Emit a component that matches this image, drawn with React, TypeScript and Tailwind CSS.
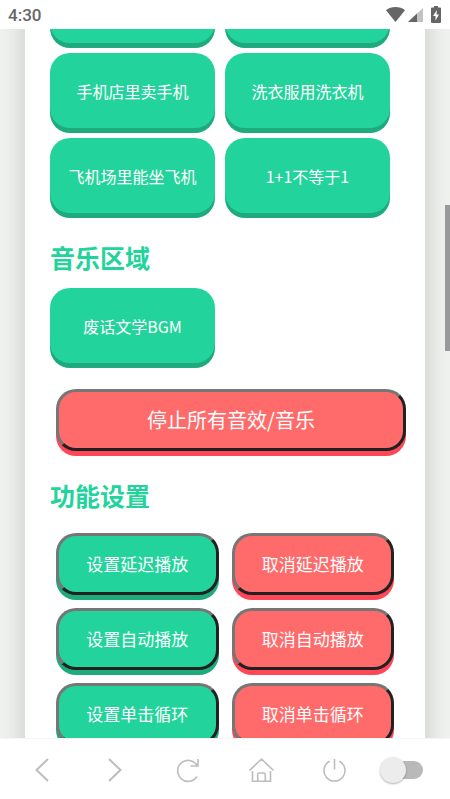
import type { ReactNode } from "react";

const soundRows = ["手机店里卖手机", "洗衣服用洗衣机", "飞机场里能坐飞机", "1+1不等于1"];

const settings = ["延迟播放", "自动播放", "单击循环"];

function SoundButton({ children }: { children?: ReactNode }) {
  return (
    <button
      type="button"
      className="h-[75px] w-full rounded-[20px] bg-[#22d49b] text-[16px] leading-6 text-white shadow-[0_5px_0_#1eaa7d]"
    >
      {children}
    </button>
  );
}

function ActionButton({ tone, large, children }: { tone: "green" | "red"; large?: boolean; children: ReactNode }) {
  const colors =
    tone === "green" ? "bg-[#22d49b] shadow-[0_5px_0_#1eaa7d]" : "bg-[#ff6b6b] shadow-[0_5px_0_#ff4757]";
  const size = large ? "text-[20px]" : "text-[17px]";
  return (
    <button
      type="button"
      className={`h-[62px] w-full rounded-[20px] border-[3px] border-t-[#767676] border-r-[#212121] border-b-[#212121] border-l-[#767676] leading-6 text-white ${colors} ${size}`}
    >
      {children}
    </button>
  );
}

function SectionTitle({ children }: { children: ReactNode }) {
  return <h2 className="text-[25px] leading-[30px] font-bold text-[#22d49b]">{children}</h2>;
}

function StatusBar() {
  return (
    <header className="flex h-[29px] shrink-0 items-center justify-between bg-white pr-2 pl-2 text-[#666666]">
      <span className="font-['Roboto',sans-serif] text-[17px] leading-5 font-medium">4:30</span>
      <svg width="56" height="18" viewBox="0 0 56 18" fill="currentColor" aria-hidden="true">
        <path d="M0 4.2C5-.1 14-.1 19 4.2L9.5 16z" />
        <path d="M37 2v14H22z" opacity=".4" />
        <path d="M31 7.6L31 16h-9z" />
        <path d="M48 1.5V0h4v1.5h2a1 1 0 0 1 1 1V16a1 1 0 0 1-1 1h-8a1 1 0 0 1-1-1V2.5a1 1 0 0 1 1-1z" />
        <path d="M51 4l-4 6h2.5v4.5L53 8.5h-2.5z" fill="white" />
      </svg>
    </header>
  );
}

function NavButton({ label, children }: { label: string; children: ReactNode }) {
  return (
    <button type="button" aria-label={label} className="flex justify-center text-[#bdbdbd]">
      <svg width="26" height="26" viewBox="0 0 26 26" fill="none" stroke="currentColor" strokeWidth="1.6">
        {children}
      </svg>
    </button>
  );
}

function BottomNav() {
  return (
    <nav className="grid h-[61px] shrink-0 grid-cols-6 items-center border-t border-[#f5f5f5] bg-white px-[5px] pt-0.5">
      <NavButton label="后退">
        <path d="M19 2L7.500 13l11.500 11" strokeWidth="2" />
      </NavButton>
      <NavButton label="前进">
        <path d="M7 2L18.500 13l-11.500 11" strokeWidth="2" />
      </NavButton>
      <NavButton label="刷新">
        <path d="M22 19.500A10.500 10.500 0 1 1 22 8.200M23 2v7H15.500" />
      </NavButton>
      <NavButton label="主页">
        <path d="M.5 13.500L12.500 2l12 11.500M3.500 14v10.200h18V14M8.700 24v-6.500a1.500 1.500 0 0 1 1.500-1.500h4.600a1.500 1.500 0 0 1 1.500 1.500V24" />
      </NavButton>
      <NavButton label="退出">
        <path d="M7.700 4.200a10.500 10.500 0 1 0 9.600 0M12.500 2v10.500" />
      </NavButton>
      <label className="relative ml-2 flex h-[26px] w-[43px] items-center">
        <input type="checkbox" role="switch" aria-label="切换" className="peer sr-only" />
        <span className="ml-3 h-[18px] w-[31px] rounded-full bg-[#b9b9b9]" />
        <span className="absolute top-0 left-0 size-[26px] rounded-full bg-[#ececec] shadow-[0_1px_2px_rgba(0,0,0,0.3)] peer-checked:left-[17px]" />
      </label>
    </nav>
  );
}

export default function App() {
  return (
    <div className="flex h-screen flex-col overflow-hidden bg-white font-['Noto_Sans_CJK_SC',sans-serif]">
      <StatusBar />
      <main className="relative min-h-0 flex-1 overflow-hidden bg-[#f0f2ef] px-[25px]">
        <div className="-mt-[61px] bg-white px-[25px] pb-10 shadow-[0_0_25px_rgba(0,0,0,0.18)]">
          <section className="grid grid-cols-2 gap-x-2.5 gap-y-2.5 pr-2.5">
            <SoundButton />
            <SoundButton />
            {soundRows.map((name) => (
              <SoundButton key={name}>{name}</SoundButton>
            ))}
          </section>
          <section className="pt-[29px]">
            <SectionTitle>音乐区域</SectionTitle>
            <div className="mt-4 grid grid-cols-2 gap-x-2.5 pr-2.5">
              <SoundButton>废话文学BGM</SoundButton>
            </div>
            <div className="-mr-1.5 pt-[26px] pl-1.5">
              <ActionButton tone="red" large>
                停止所有音效/音乐
              </ActionButton>
            </div>
          </section>
          <section className="pt-[29px]">
            <SectionTitle>功能设置</SectionTitle>
            <div className="mt-[23px] grid grid-cols-2 gap-x-[13px] gap-y-[13px] pr-1.5 pl-1.5">
              {settings.flatMap((name) => [
                <ActionButton key={"on" + name} tone="green">
                  设置{name}
                </ActionButton>,
                <ActionButton key={"off" + name} tone="red">
                  取消{name}
                </ActionButton>,
              ])}
            </div>
          </section>
        </div>
        <div className="absolute top-44 right-0 h-[146px] w-[5px] bg-[#98999b]" />
      </main>
      <BottomNav />
    </div>
  );
}
